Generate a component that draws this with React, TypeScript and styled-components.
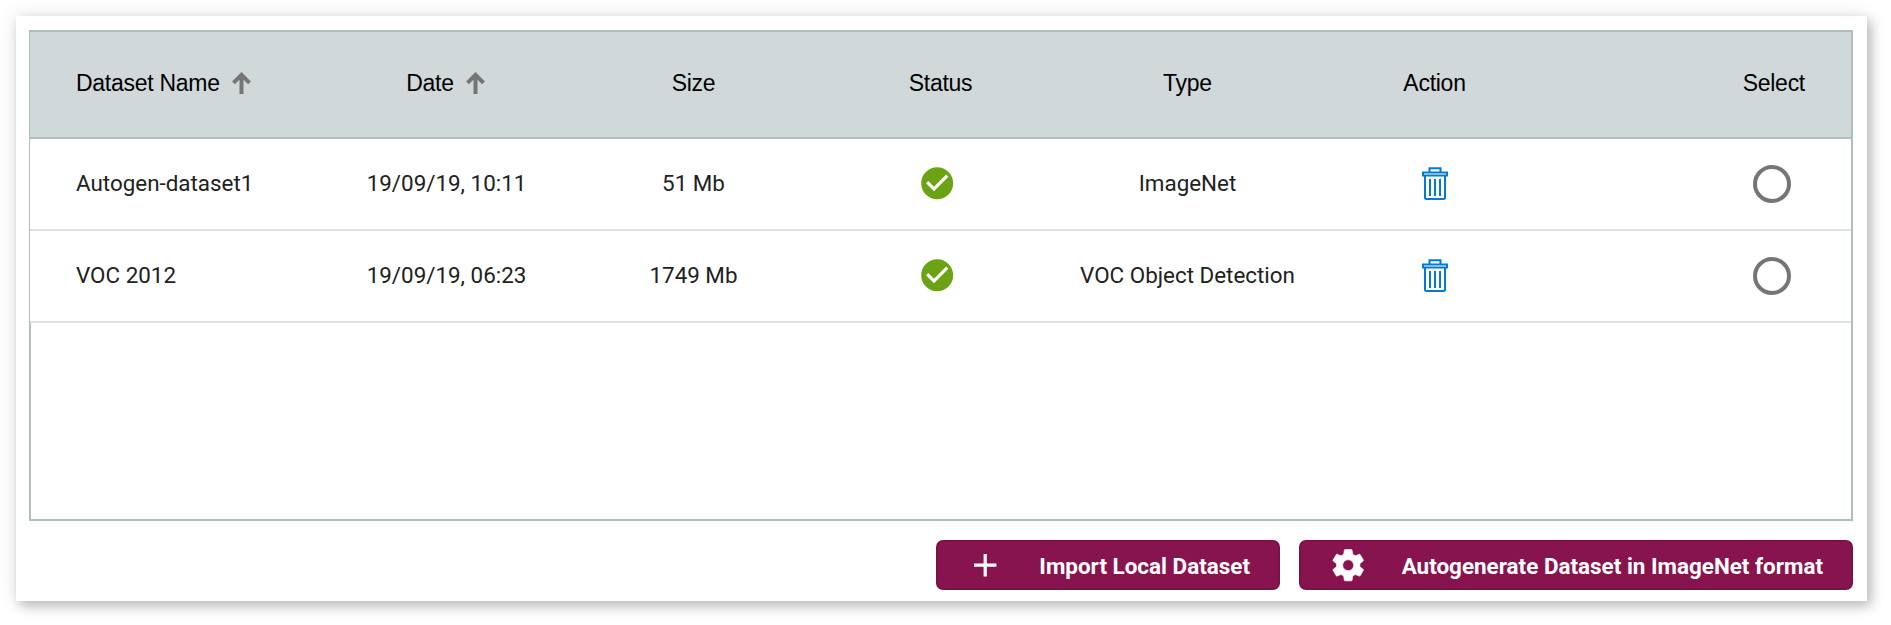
import React from 'react';
import styled, { createGlobalStyle } from 'styled-components';
import { MdAdd, MdCheckCircle } from 'react-icons/md';

const GlobalStyle = createGlobalStyle`
  *, *::before, *::after { box-sizing: border-box; }
  body { margin: 0; background: #fff; font-family: Roboto, sans-serif; }
`;

const Page = styled.main`
  height: 625px;
  padding: 16px 24px 24px 16px;
  overflow: hidden;
`;

const Card = styled.section`
  display: flex;
  flex-direction: column;
  height: 585px;
  padding: 14px 14px 11px 13px;
  background: #fff;
  box-shadow: 4px 5px 11px rgba(0, 0, 0, 0.24), 0 0 20px rgba(0, 0, 0, 0.1);
`;

const Table = styled.div`
  height: 491px;
  border: 2px solid #b0bec0;
`;

const Row = styled.div`
  display: grid;
  grid-template-columns: 293px repeat(5, 247px) 1fr;
  height: 92px;
  margin-left: -1px;
  background: #fff;
  border-bottom: 2px solid #e0e0e0;
  color: #212121;
  font-size: 22.4px;
`;

const HeaderRow = styled(Row)`
  height: 107px;
  background: #d0d8da;
  border-bottom-color: #b0bec0;
  color: #000;
  font-family: 'Liberation Sans', sans-serif;
  font-size: 23px;
  letter-spacing: -0.27px;
`;

const Cell = styled.div<{ $align?: 'start' | 'end'; $shift?: number; $lift?: number }>`
  display: flex;
  align-items: center;
  justify-content: ${(p) => p.$align ?? 'center'};
  padding: 0 ${(p) => p.$shift ?? 0}px ${(p) => p.$lift ?? 2}px ${(p) => (p.$align === 'start' ? 46 : 0)}px;
  white-space: nowrap;
`;

const SortIcon = styled.svg`
  width: 19px;
  height: 22px;
  margin: 0 0 1px 12px;
  fill: none;
  stroke: #757575;
  stroke-width: 4;
`;

const StatusIcon = styled(MdCheckCircle)`
  width: 38.4px;
  height: 38.4px;
  color: #6ba314;
`;

const Trash = styled.svg`
  width: 26px;
  height: 33px;
  margin-left: 1px;
  fill: none;
  stroke: #007bd0;
  stroke-width: 2;
`;

const Radio = styled.span`
  width: 38px;
  height: 38px;
  border: 4px solid #757575;
  border-radius: 50%;
`;

const Actions = styled.div`
  display: flex;
  justify-content: flex-end;
  gap: 19px;
  margin-top: 19px;
`;

const Button = styled.button<{ $width: number }>`
  display: flex;
  align-items: center;
  justify-content: space-between;
  width: ${(p) => p.$width}px;
  height: 50px;
  padding: 0 28px;
  border: 2px solid #7a1245;
  border-radius: 7px;
  background: #88144f;
  color: #fff;
  font: 700 22.45px Roboto, sans-serif;
  white-space: nowrap;

  svg { width: 38.4px; height: 38.4px; fill: currentColor; }
`;

const Label = styled.span`
  padding-top: 1px;
`;

const Gear = styled.svg`
  stroke: currentColor;
  stroke-width: 0.4;
`;

const SortArrow = () => (
  <SortIcon viewBox="0 0 19 22"><path d="M9.5 22V4M1.5 10.9L9.5 2.9L17.5 10.9" /></SortIcon>
);

const TrashIcon = () => (
  <Trash viewBox="0 0 26 33">
    <path d="M7.5 5V1.2H18.5V5M1 5.5H25V8.5H1ZM3 9V30.5Q3 32 4.5 32H21.5Q23 32 23 30.5V9M8 12V29M13 12V29M18 12V29" />
  </Trash>
);

const GearIcon = () => (
  <Gear viewBox="-0.25 -0.25 24.5 24.5">
    <path d="M19.43 12.98c.04-.32.07-.64.07-.98s-.03-.66-.07-.98l2.11-1.65c.19-.15.24-.42.12-.64l-2-3.46c-.12-.22-.39-.3-.61-.22l-2.49 1c-.52-.4-1.08-.73-1.69-.98l-.38-2.65C14.46 2.18 14.25 2 14 2h-4c-.25 0-.46.18-.49.42l-.38 2.65c-.61.25-1.17.59-1.69.98l-2.49-1c-.23-.09-.49 0-.61.22l-2 3.46c-.13.22-.07.49.12.64l2.11 1.65c-.04.32-.07.65-.07.98s.03.66.07.98l-2.11 1.65c-.19.15-.24.42-.12.64l2 3.46c.12.22.39.3.61.22l2.49-1c.52.4 1.08.73 1.69.98l.38 2.65c.03.24.24.42.49.42h4c.25 0 .46-.18.49-.42l.38-2.65c.61-.25 1.17-.59 1.69-.98l2.49 1c.23.09.49 0 .61-.22l2-3.46c.12-.22.07-.49-.12-.64l-2.11-1.65zM12 15.5c-1.93 0-3.5-1.57-3.5-3.5s1.57-3.5 3.5-3.5 3.5 1.57 3.5 3.5-1.57 3.5-3.5 3.5z" />
  </Gear>
);

const datasets = [
  { name: 'Autogen-dataset1', date: '19/09/19, 10:11', size: '51 Mb', type: 'ImageNet' },
  { name: 'VOC 2012', date: '19/09/19, 06:23', size: '1749 Mb', type: 'VOC Object Detection' },
];

export default function App() {
  return (
    <>
      <GlobalStyle />
      <Page>
        <Card>
          <Table>
            <HeaderRow>
              <Cell $align="start">Dataset Name<SortArrow /></Cell>
              <Cell $shift={2}>Date<SortArrow /></Cell>
              <Cell>Size</Cell>
              <Cell>Status</Cell>
              <Cell>Type</Cell>
              <Cell>Action</Cell>
              <Cell $align="end" $shift={46}>Select</Cell>
            </HeaderRow>
            {datasets.map((d) => (
              <Row key={d.name}>
                <Cell $align="start">{d.name}</Cell>
                <Cell>{d.date}</Cell>
                <Cell>{d.size}</Cell>
                <Cell $shift={7}><StatusIcon /></Cell>
                <Cell>{d.type}</Cell>
                <Cell $lift={1}><TrashIcon /></Cell>
                <Cell $align="end" $shift={60} $lift={0}><Radio /></Cell>
              </Row>
            ))}
          </Table>
          <Actions>
            <Button $width={344}><MdAdd /><Label>Import Local Dataset</Label></Button>
            <Button $width={554}><GearIcon /><Label>Autogenerate Dataset in ImageNet format</Label></Button>
          </Actions>
        </Card>
      </Page>
    </>
  );
}
